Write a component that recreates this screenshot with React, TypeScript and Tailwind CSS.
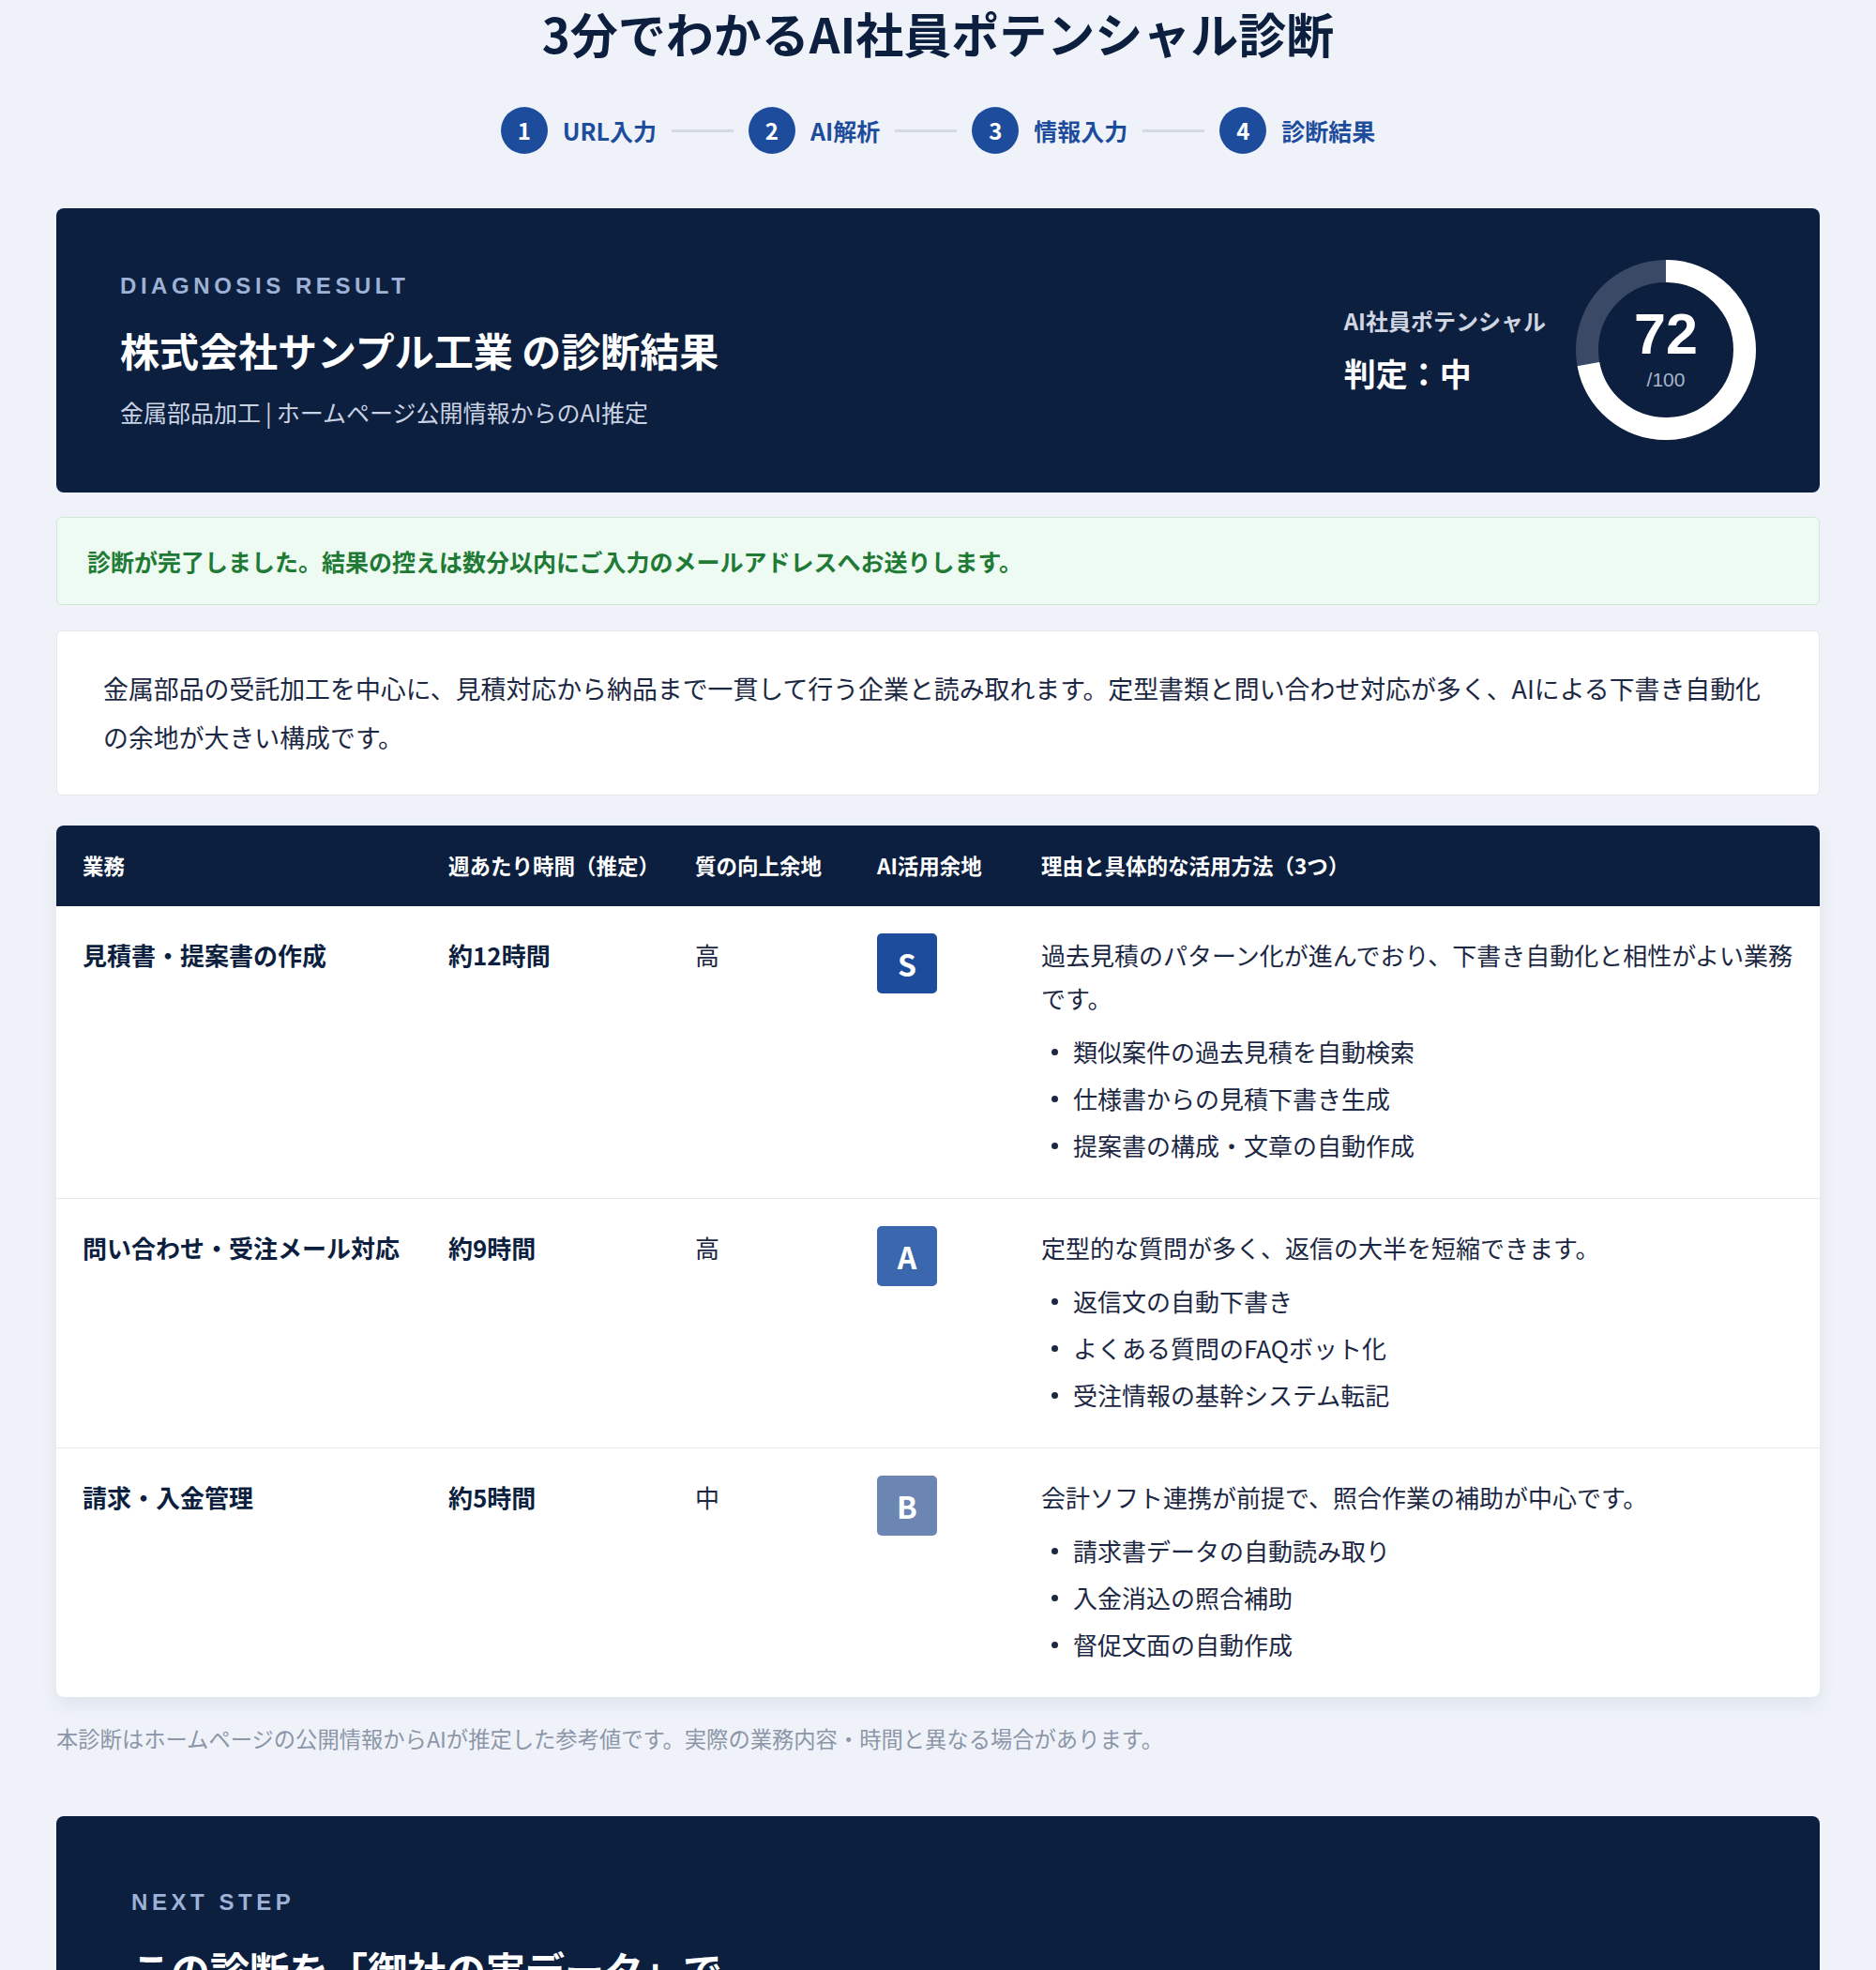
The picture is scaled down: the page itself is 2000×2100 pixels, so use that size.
import React from "react";

type Row = {
  task: string;
  hours: string;
  quality: string;
  grade: string;
  gradeClass: string;
  reason: string;
  items: string[];
};

const rows: Row[] = [
  {
    task: "見積書・提案書の作成",
    hours: "約12時間",
    quality: "高",
    grade: "S",
    gradeClass: "bg-[#1d4c9c]",
    reason: "過去見積のパターン化が進んでおり、下書き自動化と相性がよい業務です。",
    items: ["類似案件の過去見積を自動検索", "仕様書からの見積下書き生成", "提案書の構成・文章の自動作成"],
  },
  {
    task: "問い合わせ・受注メール対応",
    hours: "約9時間",
    quality: "高",
    grade: "A",
    gradeClass: "bg-[#3a67ae]",
    reason: "定型的な質問が多く、返信の大半を短縮できます。",
    items: ["返信文の自動下書き", "よくある質問のFAQボット化", "受注情報の基幹システム転記"],
  },
  {
    task: "請求・入金管理",
    hours: "約5時間",
    quality: "中",
    grade: "B",
    gradeClass: "bg-[#6c86b4]",
    reason: "会計ソフト連携が前提で、照合作業の補助が中心です。",
    items: ["請求書データの自動読み取り", "入金消込の照合補助", "督促文面の自動作成"],
  },
];

const steps = ["URL入力", "AI解析", "情報入力", "診断結果"];

function Ring({ value }: { value: number }) {
  const size = 192;
  const stroke = 24;
  const r = (size - stroke) / 2;
  const c = 2 * Math.PI * r;
  return (
    <div className="relative w-[192px] h-[192px] shrink-0">
      <svg width={size} height={size} viewBox={`0 0 ${size} ${size}`} className="block -rotate-90">
        <circle cx={size / 2} cy={size / 2} r={r} fill="none" stroke="#3a4a66" strokeWidth={stroke} />
        <circle
          cx={size / 2}
          cy={size / 2}
          r={r}
          fill="none"
          stroke="#ffffff"
          strokeWidth={stroke}
          strokeDasharray={`${(c * value) / 100} ${c}`}
        />
      </svg>
      <div className="absolute inset-0 flex flex-col items-center justify-center pb-[4px] font-['Liberation_Sans',sans-serif]">
        <div className="text-[61px] leading-[62px] font-bold text-white">{value}</div>
        <div className="mt-[6px] text-[21px] leading-[24px] text-[#a9b5c9]">/100</div>
      </div>
    </div>
  );
}

export default function App() {
  return (
    <div className="min-h-[2100px] bg-[#eff3f9] font-['Noto_Sans_CJK_JP','Noto_Sans',sans-serif] text-[#0c1f3f]">
      <div className="w-[1880px] mx-auto">
        <h1 className="text-center text-[51px] leading-[70px] font-bold text-[#0c1f3f]">
          3分でわかるAI社員ポテンシャル診断
        </h1>

        <div className="mt-[44px] flex items-center justify-center gap-4">
          {steps.map((s, i) => (
            <React.Fragment key={s}>
              <div className="w-[50px] h-[50px] rounded-full bg-[#1d4c9c] flex items-center justify-center text-white text-[24px] font-bold">
                {i + 1}
              </div>
              <div className="text-[25px] leading-[36px] font-bold text-[#1d4c9c]">{s}</div>
              {i < steps.length - 1 && <div className="w-[66px] h-[3px] bg-[#d5dae3]" />}
            </React.Fragment>
          ))}
        </div>

        <section className="mt-[58px] rounded-lg bg-[#0c1f3f] px-[68px] pt-[55px] pb-[56px] flex items-center justify-between">
          <div>
            <div className="text-[24px] leading-[32px] font-semibold tracking-[0.19em] text-[#9db2d6] font-['Liberation_Sans','Noto_Sans_CJK_JP',sans-serif]">
              DIAGNOSIS RESULT
            </div>
            <div className="mt-[24px] text-[42px] leading-[56px] font-bold text-white">
              株式会社サンプル工業 の診断結果
            </div>
            <div className="mt-[20px] text-[25px] leading-[36px] text-[#c9d2e2]">
              金属部品加工<span className="mx-[5px]">|</span>ホームページ公開情報からのAI推定
            </div>
          </div>
          <div className="flex items-center gap-[32px]">
            <div>
              <div className="text-[24px] leading-[32px] font-semibold text-[#cfd6e2]">AI社員ポテンシャル</div>
              <div className="mt-[18px] text-[34px] leading-[44px] font-bold text-white">判定：中</div>
            </div>
            <Ring value={72} />
          </div>
        </section>

        <div className="mt-[26px] rounded-md border border-[#cfe8d6] bg-[#eefbf2] px-[32px] py-[28px] text-[25px] leading-[36px] font-bold text-[#1f7a36]">
          診断が完了しました。結果の控えは数分以内にご入力のメールアドレスへお送りします。
        </div>

        <div className="mt-[27px] rounded-md border border-[#e3e8ef] bg-white pl-[49px] pr-[47px] py-[35px] text-[26.9px] leading-[52px] text-[#1c2843]">
          金属部品の受託加工を中心に、見積対応から納品まで一貫して行う企業と読み取れます。定型書類と問い合わせ対応が多く、AIによる下書き自動化の余地が大きい構成です。
        </div>

        <div className="mt-[32px] rounded-lg overflow-hidden bg-white shadow-[0_8px_20px_rgba(20,40,80,0.08)]">
          <div className="grid grid-cols-[390px_263px_194px_175px_1fr] h-[86px] items-center bg-[#0c1f3f] text-white text-[22.5px] font-bold">
            <div className="pl-[28px]">業務</div>
            <div className="pl-[28px]">週あたり時間（推定）</div>
            <div className="pl-[28px]">質の向上余地</div>
            <div className="pl-[28px]">AI活用余地</div>
            <div className="pl-[28px]">理由と具体的な活用方法（3つ）</div>
          </div>
          <div className="divide-y divide-[#e6e9ef]">
            {rows.map((r) => (
              <div key={r.task} className="grid grid-cols-[390px_263px_194px_175px_1fr] text-[26px] leading-[46px] text-[#1c2843]">
                <div className="pl-[28px] pt-[29px] font-bold text-[#0c1f3f]">{r.task}</div>
                <div className="pl-[28px] pt-[29px] font-bold text-[#0c1f3f]">{r.hours}</div>
                <div className="pl-[28px] pt-[29px]">{r.quality}</div>
                <div className="pl-[28px] pt-[29px]">
                  <div className={`w-[64px] h-[64px] rounded-[5px] ${r.gradeClass} flex items-center justify-center text-white text-[32px] font-bold`}>
                    {r.grade}
                  </div>
                </div>
                <div className="pl-[28px] pr-[16px] pt-[29px] pb-[31px]">
                  <p>{r.reason}</p>
                  <ul className="mt-[9px]">
                    {r.items.map((it) => (
                      <li key={it} className="flex items-center leading-[50px]">
                        <span className="w-[7px] h-[7px] rounded-full bg-[#1c2843] ml-[11px] mr-[16px] shrink-0" />
                        <span>{it}</span>
                      </li>
                    ))}
                  </ul>
                </div>
              </div>
            ))}
          </div>
        </div>

        <p className="mt-[27px] text-[23.3px] leading-[34px] text-[#8c96a8]">
          本診断はホームページの公開情報からAIが推定した参考値です。実際の業務内容・時間と異なる場合があります。
        </p>

        <section className="mt-[66px] rounded-lg bg-[#0c1f3f] px-[80px] pt-[76px] pb-[80px]">
          <div className="text-[24px] leading-[32px] font-semibold tracking-[0.19em] text-[#9db2d6] font-['Liberation_Sans','Noto_Sans_CJK_JP',sans-serif]">
            NEXT STEP
          </div>
          <h2 className="mt-[25px] text-[42px] leading-[59px] font-bold text-white">
            この診断を「御社の実データ」で
            <br />
            さらに精度高く検証しませんか？
          </h2>
          <p className="mt-[24px] text-[25px] leading-[44px] text-[#c9d2e2]">
            無料相談で、業務ごとの削減時間と導入ステップを具体的にご提案します。
          </p>
        </section>
      </div>
    </div>
  );
}
